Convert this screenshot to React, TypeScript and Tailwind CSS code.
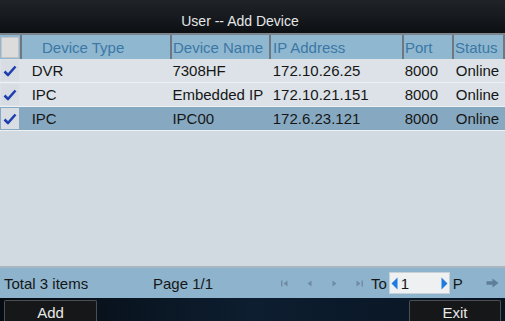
import React from 'react';

const cols = [
  { key: 'type', label: 'Device Type', w: 'w-[150px]', head: 'pl-[20px]', cell: 'pl-[10px]' },
  { key: 'name', label: 'Device Name', w: 'w-[99px]', head: 'pl-[1px]', cell: 'pl-[1px]' },
  { key: 'ip', label: 'IP Address', w: 'w-[133px]', head: 'pl-[2px]', cell: 'pl-[2px]' },
  { key: 'port', label: 'Port', w: 'w-[50px]', head: 'pl-[1px]', cell: 'pl-[1px]' },
  { key: 'status', label: 'Status', w: 'w-[51px]', head: 'pl-[1px]', cell: 'pl-[1px]' },
];

const rows = [
  { type: 'DVR', name: '7308HF', ip: '172.10.26.25', port: '8000', status: 'Online' },
  { type: 'IPC', name: 'Embedded IP', ip: '172.10.21.151', port: '8000', status: 'Online' },
  { type: 'IPC', name: 'IPC00', ip: '172.6.23.121', port: '8000', status: 'Online', selected: true },
];

const Check = () => (
  <svg width="14" height="12" viewBox="0 0 14 12">
    <path d="M1.5 6.5 L5 10 L12.5 1.5" stroke="#1f3fb0" strokeWidth="2.6" fill="none" strokeLinejoin="round" />
  </svg>
);

const NavIcon = ({ kind }: { kind: 'first' | 'prev' | 'next' | 'last' }) => (
  <svg width="9" height="9" viewBox="0 0 9 9">
    {kind === 'first' && (
      <>
        <rect x="1" y="1.5" width="1.4" height="6" fill="#6f8ba3" />
        <path d="M7.5 1.5 L3.5 4.5 L7.5 7.5 Z" fill="#6f8ba3" />
      </>
    )}
    {kind === 'prev' && <path d="M6.5 1.5 L2.5 4.5 L6.5 7.5 Z" fill="#6f8ba3" />}
    {kind === 'next' && <path d="M2.5 1.5 L6.5 4.5 L2.5 7.5 Z" fill="#6f8ba3" />}
    {kind === 'last' && (
      <>
        <path d="M1.5 1.5 L5.5 4.5 L1.5 7.5 Z" fill="#6f8ba3" />
        <rect x="6.6" y="1.5" width="1.4" height="6" fill="#6f8ba3" />
      </>
    )}
  </svg>
);

export default function App() {
  return (
    <div className="w-[505px] h-[321px] flex flex-col overflow-hidden bg-[#d2dae1] font-['Liberation_Sans',Arial,sans-serif]">
      {/* title */}
      <div className="h-[33px] flex items-end justify-center pb-[5px] pr-[25px] bg-gradient-to-b from-[#202429] to-[#0d1013] text-[#e4e6e8] text-[14px] leading-none">
        User -- Add Device
      </div>
      <div className="h-[2px] bg-[#7c858c]" />

      {/* header */}
      <div className="h-[24px] flex bg-[#8fb7cf] text-[15px] text-[#3b78a6] leading-none">
        <div className="w-[20px] flex items-center justify-center">
          <div className="w-[18px] h-[21px] bg-[#dcdcdc] border border-[#c4c4c4] rounded-[1px]" />
        </div>
        {cols.map((c) => (
          <div key={c.key} className={`${c.w} ${c.head} flex items-center border-l-2 border-[#6d7881]`}>
            {c.label}
          </div>
        ))}
        <div className="w-[2px] bg-[#6d7881]" />
      </div>

      {/* rows */}
      {rows.map((r, i) => (
        <div
          key={i}
          className={`h-[24px] flex text-[15px] text-[#161616] leading-none border-b border-[#eef1f3] ${r.selected ? 'bg-[#86a9c1] border-[#7a8e9c]' : 'bg-[#dce2e7]'}`}
        >
          <div className="w-[20px] flex items-center justify-center">
            <div className="w-[18px] h-[21px] flex items-center justify-center bg-[#d7dde2]">
              <Check />
            </div>
          </div>
          {cols.map((c) => (
            <div key={c.key} className={`${c.w} ${c.cell} flex items-center whitespace-nowrap overflow-hidden ml-[2px]`}>
              {(r as any)[c.key]}
            </div>
          ))}
        </div>
      ))}

      <div className="flex-1" />

      {/* footer */}
      <div className="h-[32px] flex items-center bg-[#8db4cc] border-t-2 border-[#a9b6bf] text-[15px] text-[#161616] leading-none">
        <div className="w-[153px] pl-[4px]">Total 3 items</div>
        <div className="w-[127px]">Page 1/1</div>
        <div className="flex items-center gap-[16px]">
          <NavIcon kind="first" />
          <NavIcon kind="prev" />
          <NavIcon kind="next" />
          <NavIcon kind="last" />
        </div>
        <div className="ml-[7px]">To</div>
        <div className="ml-[2px] w-[61px] h-[22px] flex items-center justify-between bg-[#eef0f2] border border-[#c7d1d8] px-[1px]">
          <div className="flex items-center">
            <svg width="7" height="13" viewBox="0 0 7 13"><path d="M6.5 0.5 L0.5 6.5 L6.5 12.5 Z" fill="#1e7ce0" /></svg>
            <span className="ml-[3px]">1</span>
          </div>
          <svg width="7" height="13" viewBox="0 0 7 13"><path d="M0.5 0.5 L6.5 6.5 L0.5 12.5 Z" fill="#1e7ce0" /></svg>
        </div>
        <div className="ml-[3px]">P</div>
        <div className="ml-auto mr-[6px]">
          <svg width="13" height="10" viewBox="0 0 13 10">
            <path d="M0.5 3.3 H6.5 V0.5 L12.5 5 L6.5 9.5 V6.7 H0.5 Z" fill="#5f7e98" />
          </svg>
        </div>
      </div>

      {/* bottom */}
      <div className="h-[23px] flex items-end justify-between px-[4px] bg-gradient-to-r from-[#060b12] via-[#0d1e30] to-[#081321]">
        <button className="w-[93px] h-[21px] bg-[#161718] border-t border-x border-[#4b4f53] rounded-t-[2px] text-[#e8e8e8] text-[15px] leading-none pt-[2px]">
          Add
        </button>
        <button className="w-[92px] h-[21px] bg-[#161718] border-t border-x border-[#4b4f53] rounded-t-[2px] text-[#e8e8e8] text-[15px] leading-none pt-[2px]">
          Exit
        </button>
      </div>
    </div>
  );
}
